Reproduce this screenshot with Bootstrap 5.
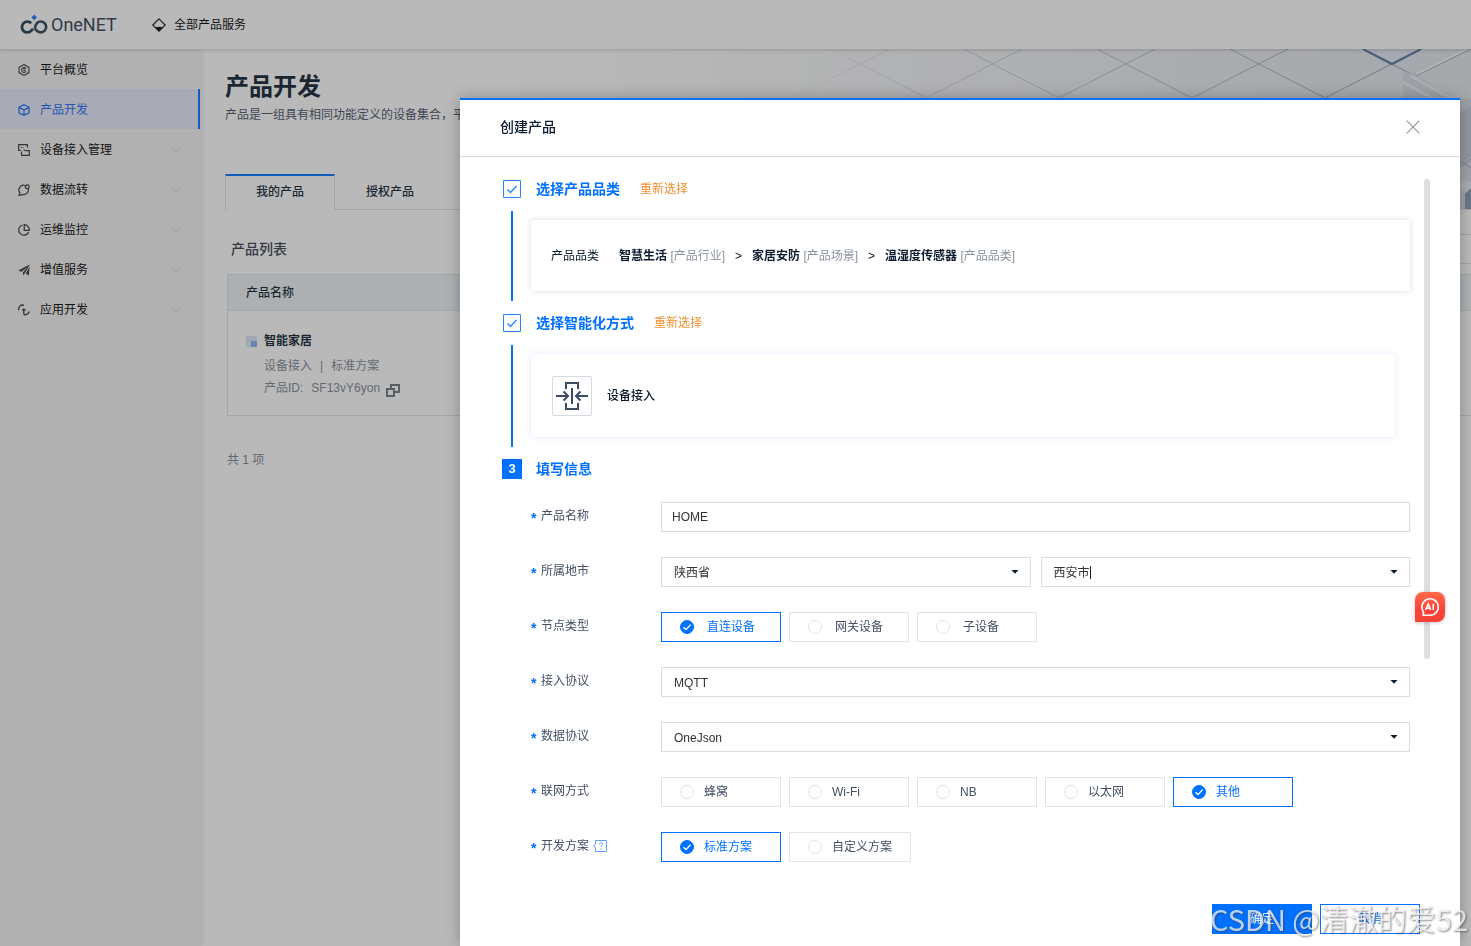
<!DOCTYPE html>
<html lang="zh-CN">
<head>
<meta charset="utf-8">
<meta name="viewport" content="width=device-width, initial-scale=1">
<title>OneNET 产品开发</title>
<link href="https://cdn.jsdelivr.net/npm/bootstrap@5.3.0/dist/css/bootstrap.min.css" rel="stylesheet">
<style>
:root{--blue:#0070ff;--ink:#0b1c2e;--slate:#455064;--line:#d8dde4}
body{font-family:"Liberation Sans","Noto Sans CJK SC",sans-serif;font-size:12px;line-height:20px;color:var(--ink);background:#fff}
a{text-decoration:none}
h1,h2,h3,p{margin:0}
svg{display:block;flex:none}
/* page shell */
.page-shell{height:100vh;overflow:hidden}
.top-bar{height:49px;padding:0 20px;background:#fff;box-shadow:0 1px 4px rgba(0,0,0,.2);position:relative;z-index:2}
.brand{width:132px;gap:3px;color:#2c3e50;font:18px/24px Roboto,sans-serif}
.all-products{gap:8px;color:#000}
.side-bar{position:relative;z-index:1;width:201px;flex:none;background:#f3f3f3;box-shadow:1px 0 4px rgba(0,0,0,.12)}
.side-bar .nav-link{height:40px;padding:1px 20px 0 18px;gap:10px;color:#000;display:flex;align-items:center}
.side-bar .nav-link.active{background:#e5eaf9;color:#1168f5;border-right:2px solid var(--blue);margin-right:1px}
.side-bar .chev{margin-left:auto;color:#ccc}
.banner{position:relative;height:161px;padding:24px 0 0 24px;background:linear-gradient(90deg,#fff 25%,#e6e9ee 85%,#dfe4ec)}
.banner-art{position:absolute;right:0;top:0}
.banner h1{font-size:24px;line-height:28px;font-weight:700}
.banner p{margin-top:4px;color:var(--slate);white-space:nowrap}
.tab-row{position:absolute;left:24px;right:0;bottom:0;height:36px;border:0;flex-wrap:nowrap}
.tab-row::after{content:"";flex:1;border-bottom:1px solid #dfe1e5}
.tab-row .nav-link{width:110px;height:36px;padding:8px 0 0;text-align:center;font-weight:500;color:var(--ink);border:0;border-bottom:1px solid #dfe1e5;border-radius:0;margin:0}
.tab-row .nav-link.active{padding-top:6px;border:1px solid #dfe1e5;border-top:2px solid var(--blue);border-bottom:0;background:#fff;color:var(--ink)}
.list-area{padding:24px 0 0 26px}
.list-head{padding-left:4px;height:30px}
.list-head h2{font-size:14px;line-height:20px;font-weight:500;color:#333d4a}
.list-head input{width:200px;height:30px;border:1px solid var(--line);border-right:0;border-radius:0}
.product-table{width:100%;margin-top:10px;border:1px solid #dfe2e5;border-right:0}
.product-table th{height:36px;padding:0 18px;background:#ecf2f5;font-weight:500;border-bottom:1px solid #dfe2e5}
.product-table td{height:105px;padding:0 18px}
.prod-mark{position:relative;width:11px;height:11px;background:#dce5f5;margin-right:7px}
.prod-mark::after{content:"";position:absolute;right:0;bottom:0;width:6px;height:6px;background:#7cb2fb}
.prod-info{padding-left:18px;color:#7c8592;line-height:22px}
.prod-sep{margin:0 8px}
.total-line{margin-top:34px;color:#7c8592}
/* dialog */
.modal-backdrop{--bs-backdrop-bg:#373737;--bs-backdrop-opacity:.35}
.create-dialog{width:1000px;max-width:calc(100% - 22px);margin:98px 11px 0 auto;min-height:calc(100vh - 98px);display:flex}
.create-dialog .modal-content{border:0;border-top:2px solid var(--blue);border-radius:0;box-shadow:0 0 14px rgba(0,0,0,.28);color:var(--ink)}
.create-dialog .modal-header{height:57px;padding:0 40px 2px;border-bottom:1px solid #d5dbe3;border-radius:0}
.create-dialog .modal-title{font-size:14px;line-height:20px;font-weight:500}
.close-x{border:0;background:none;padding:0;color:#999}
.create-dialog .modal-body{padding:22px 30px 0 42px;gap:14px}
.create-dialog .modal-footer{padding:12px 40px;gap:8px;border:0}
.create-dialog .modal-footer .btn{width:100px;height:30px;margin:0;padding:0;border-radius:0;font-size:12px;line-height:20px;border:1px solid var(--blue)}
.btn-ok{background:var(--blue);color:#fff}
.btn-no{background:#fff;color:var(--blue)}
.scroll-thumb{width:6px;height:480px;border-radius:3px;background:#dcdee0;flex:none}
.step-head{height:20px;gap:14px}
.step-head h3{font-size:14px;line-height:20px;font-weight:700;color:var(--blue)}
.step-head a{color:#f09030;margin-left:6px}
.step-num{width:20px;height:20px;background:var(--blue);color:#fff;font-size:13px;font-weight:700;text-align:center}
.step-body{margin:12px 0 12px 9px;padding:9px 0 10px 18px;border-left:2px solid var(--blue)}
.panel{padding:20px;background:#fff}
.panel-path{min-height:71px;box-shadow:0 0 6px rgba(0,0,0,.14)}
.panel-mode{margin-right:15px;padding:22px 21px 21px;gap:15px;box-shadow:0 0 6px rgba(0,90,220,.12);font-weight:500}
.mode-box{width:40px;height:40px;border:1px solid #d8dbe0;border-radius:2px;display:flex;align-items:center;justify-content:center}
.path-list{gap:10px}
.muted{color:#8b93a0;font-weight:400}
.form-rows{padding:23px 0 0 29px;gap:25px}
.form-line{min-height:30px}
.form-line>.field-name{width:130px;flex:none;color:var(--slate);gap:4px;padding:4px 0 6px;margin:0;font-size:12px;line-height:20px}
.field-name i{font-style:normal;font-weight:700;font-size:14px;color:var(--blue);width:6px;height:20px;line-height:25px}
.form-line .form-control,.form-line .form-select{height:30px;border:1px solid var(--line);border-radius:0;font-size:12px;line-height:18px;color:#333;padding:5px 10px}
.form-line .form-select{padding:6px 30px 4px 12px;background-image:url("data:image/svg+xml,%3Csvg xmlns='http://www.w3.org/2000/svg' viewBox='0 0 8 4'%3E%3Cpath d='M.5 0h7L4 3.8z' fill='%230b1c2e'/%3E%3C/svg%3E");background-size:8px 4px;background-position:right 11px center}
.city-pair{display:grid;grid-template-columns:1fr 1fr;gap:10px;flex:1}
.caret-bar{position:absolute;left:49px;top:9px;width:1px;height:13px;background:#222}
.opt{min-width:120px;height:30px;padding:0 18px;border:1px solid #e2e4e7;color:var(--slate);display:flex;align-items:center;gap:10px}
.opt-wide .opt{gap:13px}
.opt .form-check-input{width:14px;height:14px;margin:0;border:1px solid #e0e2e5;flex:none}
.opt .form-check-input:checked{background-color:var(--blue);border-color:var(--blue);background-size:14px 14px;background-image:url("data:image/svg+xml,%3Csvg xmlns='http://www.w3.org/2000/svg' viewBox='0 0 14 14'%3E%3Cpath d='M3.5 7.2l2.5 2.4 4.6-5' fill='none' stroke='%23fff' stroke-width='1.4'/%3E%3C/svg%3E")}
.opt:has(:checked){border-color:var(--blue);color:var(--blue)}
/* floating layers */
.ai-btn{position:fixed;right:26px;top:592px;z-index:1060;width:30px;height:30px;padding:0;border:0;border-radius:8px 8px 8px 1px;background:linear-gradient(#ff6a4a,#fb4238 60%);box-shadow:0 1px 4px rgba(0,0,0,.2);display:flex;align-items:center;justify-content:center}
.csdn-mark{position:fixed;right:3px;bottom:8px;z-index:1061;pointer-events:none;font:29px/40px "Noto Sans CJK SC",sans-serif;color:rgba(255,255,255,.72);text-shadow:1px 1px 2px rgba(60,60,60,.6);white-space:nowrap}
</style>
</head>
<body>
<div class="page-shell d-flex flex-column">
  <header class="top-bar d-flex align-items-center">
    <a href="#" class="brand d-flex align-items-center">
      <svg width="28" height="22" viewBox="0 0 28 22" fill="none"><path d="M11.200 9.300A5.400 5.400 0 1 0 11.200 16.800l1.800-1.900" stroke="#20394d" stroke-width="2.800"/><path d="M14.800 14.900l2.200 1.900a5.400 5.400 0 1 0-.2-7.500c-1.400 1.500-2 3-2 5.600" stroke="#2c4358" stroke-width="2.600"/><path d="M14.200.600l2.800 2.800-2.800 2.800-2.800-2.800z" fill="#1a73f5"/></svg>
      <span>OneNET</span>
    </a>
    <a href="#" class="all-products d-flex align-items-center">
      <svg width="14" height="14" viewBox="0 0 14 14"><path d="M7 .8L13.2 7 7 13.2.8 7z" fill="none" stroke="#111" stroke-width="1.2"/><path d="M3.6 9.2L7 8.7l3.4.5L7 13z" fill="#000"/></svg>
      <span>全部产品服务</span>
    </a>
  </header>
  <div class="d-flex flex-grow-1">
    <nav class="side-bar nav flex-column">
      <a class="nav-link" href="#"><svg width="12" height="12" viewBox="0 0 12 12" fill="none" stroke="#333" stroke-width="1.1"><path d="M6 .6l5 2.800v5.200l-5 2.800-5-2.800V3.400z"/><path d="M8 4.600A2.400 2.400 0 1 0 8 7.400M6 4.500v1.700h1.600"/></svg>平台概览</a>
      <a class="nav-link active" href="#"><svg width="12" height="12" viewBox="0 0 12 12" fill="none" stroke="#1168f5" stroke-width="1.200"><path d="M6 .7l5 2.500v5.600l-5 2.500-5-2.500V3.200zM1.500 3.600L6 6l4.500-2.400M6 6v5"/></svg>产品开发</a>
      <a class="nav-link" href="#"><svg width="12" height="12" viewBox="0 0 12 12" fill="none" stroke="#333" stroke-width="1.200"><path d="M9.400 3.500V.7H.7v5.600h2M3 3.500h.9M4.700 3.500h.8M5.500 5.800l2.500 1M3.500 7.500v3.800h7.800V6.600H8.200"/></svg>设备接入管理<svg class="chev" width="10" height="6" viewBox="0 0 10 6" fill="none" stroke="currentColor"><path d="M1 1l4 4 4-4"/></svg></a>
      <a class="nav-link" href="#"><svg width="12" height="12" viewBox="0 0 12 12" fill="none" stroke="#333" stroke-width="1.200"><path d="M7 1.500A4.700 4.700 0 0 0 2 9l-1 2.300 4-.7A4.800 4.800 0 0 0 10.300 5"/><circle cx="9.200" cy="2.800" r="1.900"/></svg>数据流转<svg class="chev" width="10" height="6" viewBox="0 0 10 6" fill="none" stroke="currentColor"><path d="M1 1l4 4 4-4"/></svg></a>
      <a class="nav-link" href="#"><svg width="12" height="12" viewBox="0 0 12 12" fill="none" stroke="#333" stroke-width="1.200"><path d="M4.500 1a5.200 5.200 0 1 0 6.200 7M6.200.7v5.600h5.100A5.200 5.200 0 0 0 6.200.7z"/></svg>运维监控<svg class="chev" width="10" height="6" viewBox="0 0 10 6" fill="none" stroke="currentColor"><path d="M1 1l4 4 4-4"/></svg></a>
      <a class="nav-link" href="#"><svg width="12" height="12" viewBox="0 0 12 12" fill="#333"><path d="M11.800.4L.2 6.500l3.300 1.300L9.300 3 5 8.300v3.200l1.700-2zM11.700 2.500l-.9 9-3-2z"/></svg>增值服务<svg class="chev" width="10" height="6" viewBox="0 0 10 6" fill="none" stroke="currentColor"><path d="M1 1l4 4 4-4"/></svg></a>
      <a class="nav-link" href="#"><svg width="12" height="12" viewBox="0 0 12 12" fill="none" stroke="#333" stroke-width="1.300"><path d="M.8 6.200A4 4 0 0 1 6 1.300M5.800 4.500v4.800c0 2.600 4.400 1.800 5.400-1.800M4 5.800h3.800"/></svg>应用开发<svg class="chev" width="10" height="6" viewBox="0 0 10 6" fill="none" stroke="currentColor"><path d="M1 1l4 4 4-4"/></svg></a>
    </nav>
    <main class="flex-grow-1">
      <section class="banner">
        <svg class="banner-art" width="700" height="161" viewBox="0 0 700 161" fill="none">
          <defs><linearGradient id="fade" gradientUnits="userSpaceOnUse" x1="0" y1="0" x2="700" y2="0"><stop offset="0" stop-color="#aab3c0" stop-opacity="0"/><stop offset=".3" stop-color="#aab3c0" stop-opacity=".6"/><stop offset="1" stop-color="#8793a6"/></linearGradient></defs>
          <path stroke="url(#fade)" d="M60 0l95 49M118 0L22 49M193 0l95 49M251 0l-96 49M326 0l95 49M384 0l-96 49M459 0l95 49M517 0l-96 49M592 0l52 27M650 0l-96 49"/>
          <path d="M592 0l29 15 29-15z" fill="#e2e8f2"/>
          <path d="M592 0l29 15 29-15" stroke="#52749c" stroke-width="2"/>
          <path d="M632 24l13-1 55-26v115l-28-16-40-33z" fill="#d4dae3"/>
          <path d="M645 25l55-27v65z" fill="#e2e5ea"/>
          <path d="M640 27l60 34M632 33l68 38" stroke="#e9ecf0" stroke-width="3"/>
          <path d="M645 25l55-27" stroke="#f2f4f6" stroke-width="2"/>
          <path d="M645 27l55-27" stroke="#a0abba"/>
          <path d="M689 50h11v111h-11z" fill="#d3dae3"/>
          <path d="M689 64l11-6v50l-11 8z" fill="#c0cad7"/>
          <path d="M689 112l11 7M689 118l11-8" stroke="#96a5b9"/>
          <circle cx="695" cy="137" r="6" fill="#e6ebf0"/>
          <path d="M694 145l6-6v22h-6z" fill="#8299b3"/>
        </svg>
        <h1 class="position-relative">产品开发</h1>
        <p class="position-relative">产品是一组具有相同功能定义的设备集合，平台为产品提供设备管理能力</p>
        <div class="nav nav-tabs tab-row"><a class="nav-link active" href="#">我的产品</a><a class="nav-link" href="#">授权产品</a></div>
      </section>
      <section class="list-area">
        <div class="list-head d-flex align-items-center justify-content-between"><h2>产品列表</h2><input type="search" aria-label="搜索产品"></div>
        <table class="product-table">
          <thead><tr><th scope="col">产品名称</th></tr></thead>
          <tbody><tr><td>
            <div class="d-flex align-items-center mb-1 pt-1 fw-bold"><span class="prod-mark"></span>智能家居</div>
            <div class="prod-info">设备接入<span class="prod-sep">|</span>标准方案</div>
            <div class="prod-info d-flex align-items-center"><span class="me-2">产品ID:</span><span>SF13vY6yon</span><svg class="ms-1 mt-1" width="16" height="13" viewBox="-2 0 16 13" fill="none" stroke="#6c7682" stroke-width="2"><path d="M5 4V1h8v7H9"/><path d="M1 5h7v7H1z"/></svg></div>
          </td></tr></tbody>
        </table>
        <p class="total-line">共 1 项</p>
      </section>
    </main>
  </div>
</div>

<div class="modal-backdrop show"></div>
<div class="modal show d-block" tabindex="-1" role="dialog" aria-labelledby="dlgTitle">
  <div class="modal-dialog create-dialog">
    <form class="modal-content">
      <div class="modal-header">
        <h2 class="modal-title" id="dlgTitle">创建产品</h2>
        <button type="button" class="close-x" aria-label="关闭"><svg width="14" height="14" viewBox="0 0 14 14" stroke="currentColor" stroke-width="1.200"><path d="M.7.700l12.600 12.600M13.300.7L.7 13.300"/></svg></button>
      </div>
      <div class="modal-body d-flex">
        <div class="flex-grow-1">
          <div class="step-head d-flex align-items-center">
            <svg width="20" height="20" viewBox="0 0 20 20" fill="none" stroke="#2a86ff"><path d="M1.500 1.500h17v17h-17z"/><path d="M5.500 10.500l3 3 6-6.500" stroke-width="1.400"/></svg>
            <h3>选择产品品类</h3><a href="#">重新选择</a>
          </div>
          <div class="step-body">
            <div class="panel panel-path d-flex align-items-center">
              <span class="me-3 pe-1">产品品类</span>
              <div class="path-list d-flex"><span><b>智慧生活</b> <span class="muted">[产品行业]</span></span><span>&gt;</span><span><b>家居安防</b> <span class="muted">[产品场景]</span></span><span>&gt;</span><span><b>温湿度传感器</b> <span class="muted">[产品品类]</span></span></div>
            </div>
          </div>
          <div class="step-head d-flex align-items-center">
            <svg width="20" height="20" viewBox="0 0 20 20" fill="none" stroke="#2a86ff"><path d="M1.500 1.500h17v17h-17z"/><path d="M5.500 10.500l3 3 6-6.500" stroke-width="1.400"/></svg>
            <h3>选择智能化方式</h3><a href="#">重新选择</a>
          </div>
          <div class="step-body">
            <div class="panel panel-mode d-flex align-items-center">
              <span class="mode-box"><svg width="32" height="30" viewBox="0 0 32 30" fill="none" stroke="#3c4a63" stroke-width="2"><path d="M10 8V2h12v6M10 22v6h12v-6"/><path d="M16 7v16" stroke-width="2"/><path d="M0 15h12M7.500 10.500L12 15l-4.500 4.500M32 15H20M24.500 10.500L20 15l4.500 4.500"/></svg></span>
              <span>设备接入</span>
            </div>
          </div>
          <div class="step-head d-flex align-items-center"><span class="step-num">3</span><h3>填写信息</h3></div>

          <div class="form-rows d-flex flex-column">
            <div class="form-line d-flex">
              <label class="field-name d-flex" for="pname"><i>*</i>产品名称</label>
              <input class="form-control" id="pname" type="text" value="HOME">
            </div>
            <div class="form-line d-flex">
              <label class="field-name d-flex" for="prov"><i>*</i>所属地市</label>
              <div class="city-pair">
                <select class="form-select" id="prov"><option>陕西省</option></select>
                <div class="position-relative"><select class="form-select" aria-label="城市"><option>西安市</option></select><span class="caret-bar"></span></div>
              </div>
            </div>
            <div class="form-line d-flex" role="radiogroup" aria-labelledby="lNode">
              <span class="field-name d-flex" id="lNode"><i>*</i>节点类型</span>
              <div class="d-flex gap-2 opt-wide">
                <label class="opt"><input class="form-check-input" type="radio" name="node" checked>直连设备</label>
                <label class="opt"><input class="form-check-input" type="radio" name="node">网关设备</label>
                <label class="opt"><input class="form-check-input" type="radio" name="node">子设备</label>
              </div>
            </div>
            <div class="form-line d-flex">
              <label class="field-name d-flex" for="proto"><i>*</i>接入协议</label>
              <select class="form-select" id="proto"><option>MQTT</option></select>
            </div>
            <div class="form-line d-flex">
              <label class="field-name d-flex" for="dproto"><i>*</i>数据协议</label>
              <select class="form-select" id="dproto"><option>OneJson</option></select>
            </div>
            <div class="form-line d-flex" role="radiogroup" aria-labelledby="lNet">
              <span class="field-name d-flex" id="lNet"><i>*</i>联网方式</span>
              <div class="d-flex gap-2">
                <label class="opt"><input class="form-check-input" type="radio" name="net">蜂窝</label>
                <label class="opt"><input class="form-check-input" type="radio" name="net">Wi-Fi</label>
                <label class="opt"><input class="form-check-input" type="radio" name="net">NB</label>
                <label class="opt"><input class="form-check-input" type="radio" name="net">以太网</label>
                <label class="opt"><input class="form-check-input" type="radio" name="net" checked>其他</label>
              </div>
            </div>
            <div class="form-line d-flex" role="radiogroup" aria-labelledby="lDev">
              <span class="field-name d-flex" id="lDev"><i>*</i>开发方案<svg class="mt-1" width="14" height="12" viewBox="0 0 14 12" fill="none" stroke="#5aa2ff"><path d="M2.500.500h11v11h-11V8L.7 6l1.800-2z"/><path d="M6.300 4.300c0-2 3.400-2 3.400 0C9.700 5.600 8 5.500 8 7M8 8.300v1.200"/></svg></span>
              <div class="d-flex gap-2">
                <label class="opt"><input class="form-check-input" type="radio" name="dev" checked>标准方案</label>
                <label class="opt"><input class="form-check-input" type="radio" name="dev">自定义方案</label>
              </div>
            </div>
          </div>
        </div>
        <div class="scroll-thumb"></div>
      </div>
      <div class="modal-footer">
        <button type="button" class="btn btn-ok">确定</button>
        <button type="button" class="btn btn-no">取消</button>
      </div>
    </form>
  </div>
</div>
<button type="button" class="ai-btn" aria-label="AI 助手"><svg width="20" height="20" viewBox="0 0 20 20" fill="none" stroke="#fff" stroke-width="1.600"><path d="M3.200 18.200l.3-3.300A8.200 8.200 0 1 1 10 18.200z" stroke-linejoin="round"/><path d="M5.500 13l2.700-6 2.600 6M6.600 11.300h3.300M13.300 6.700V13"/></svg></button>
<div class="csdn-mark">CSDN @清澈的爱52</div>
<script src="https://cdn.jsdelivr.net/npm/bootstrap@5.3.0/dist/js/bootstrap.bundle.min.js"></script>
</body>
</html>
